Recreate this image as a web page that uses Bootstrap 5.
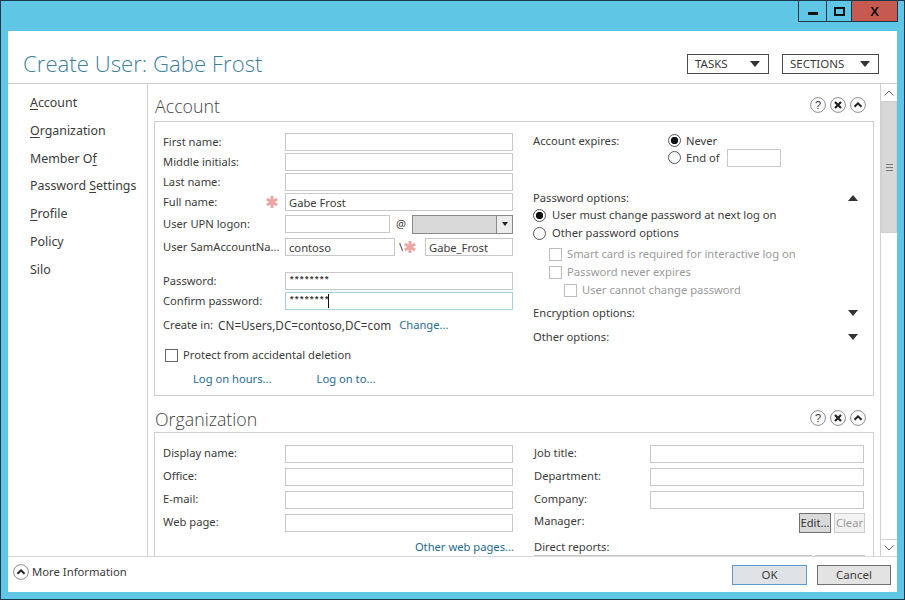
<!DOCTYPE html>
<html>
<head>
    <title>Create User: Gabe Frost</title>
    <meta charset="utf-8">
    <link href="https://cdn.jsdelivr.net/npm/bootstrap@5.3.3/dist/css/bootstrap.min.css" rel="stylesheet">
    <script src="https://cdn.jsdelivr.net/npm/bootstrap@5.3.3/dist/js/bootstrap.bundle.min.js"></script>
    <style>
        html, body { margin: 0; height: 100%; overflow: hidden; }
        body { background: #5fc6e6; font-family: "Noto Sans", "Open Sans", sans-serif; font-size: 11.2px; color: #3b3b3b; line-height: 16px; }
        u { text-underline-offset: 2px; }
        a { color: #1f6c8e; text-decoration: none; }

        .win { width: 905px; height: 600px; border: 1px solid #16384a; border-top-width: 1px; padding: 0 7px 7px 7px; background: #5fc6e6; }
        .win-bar { height: 30px; padding-right: 0; margin-right: -1px; }
        .win-btn { height: 21px; border: 1px solid #16384a; border-top: 0; margin-left: -1px; }
        .win-min { width: 29px; }
        .win-max { width: 26px; }
        .win-close { width: 47px; background: #c75a50; }
        .glyph-min { width: 10px; height: 3px; background: #111; margin-top: 5px; }
        .glyph-max { width: 11px; height: 9px; border: 2px solid #111; }
        .glyph-x { font: 700 13px "Liberation Sans", sans-serif; color: #111; }

        .client { width: 889px; height: 561px; background: #fff; }
        .top-head { height: 53px; border-bottom: 1px solid #d0d0d0; padding: 23px 18px 0 15px; }
        .page-title { font-family: "Open Sans", sans-serif; font-weight: 300; font-size: 22.2px; line-height: 20px; color: #3e7f9d; margin: 0; }
        .head-btn { height: 20px; border: 1px solid #4a4a4a; border-radius: 0; background: #fff; color: #3b3b3b; font-size: 11.5px; line-height: 18px; padding: 0 8px 0 7px; }
        .head-btn:hover { background: #fff; color: #3b3b3b; border-color: #4a4a4a; }
        .w-tasks { width: 82px; margin-right: 13px; }
        .w-sections { width: 97px; }
        .tri-down { width: 0; height: 0; border: 5px solid transparent; border-top: 6px solid #333; border-bottom: 0; }
        .tri-up { width: 0; height: 0; border: 5px solid transparent; border-bottom: 6px solid #333; border-top: 0; }

        .mid { height: 473px; border-bottom: 1px solid #d8d8d8; overflow: hidden; }
        .side { width: 140px; border-right: 1px solid #d0d0d0; padding: 11px 0 0 22px; flex: none; }
        .side-item { height: 27.8px; font-size: 12.4px; line-height: 16px; color: #3b3b3b; white-space: nowrap; }
        .scroll-pane { width: 732px; flex: none; overflow: hidden; padding: 0 6px 0 6px; }
        .sec-head { height: 37px; padding: 10px 8px 0 1px; }
        .sec-title { font-family: "Open Sans", sans-serif; font-weight: 300; font-size: 17.8px; line-height: 24px; color: #444; margin: 0; }
        .sec-icons { gap: 4px; padding-top: 3px; }
        .sec-icons svg { width: 16px; height: 16px; display: block; }
        .box { border: 1px solid #cfcfcf; width: 720px; background: #fff; }
        .box-acct { height: 275px; margin-bottom: 11px; }
        .box-org { height: 200px; }

        .col-l { width: 378px; flex: none; padding: 10px 0 0 8px; }
        .col-r { padding: 0; flex: 1; }
        .frow { display: flex; align-items: center; height: 20px; white-space: nowrap; }
        .frow .lbl { width: 122px; flex: none; position: relative; }
        .fld { height: 18px; min-height: 0; padding: 0 3px; border: 1px solid #c8c8c8; border-radius: 0; font-size: 11.2px; line-height: 16px; color: #3b3b3b; box-shadow: none; font-family: inherit; }
        .w228 { width: 228px; }
        .w105 { width: 105px; flex: none; }
        .w110 { width: 110px; flex: none; }
        .w88 { width: 88px; flex: none; }
        .fld-active { border-color: #a8cfe0; }
        .star { width: 14px; height: 14px; display: block; flex: none; }
        .star-abs { position: absolute; right: 6px; top: 1px; }
        .sam-sep { width: 30px; padding-left: 4px; }
        .combo { width: 101px; height: 19px; background: #d9d9d9; border: 1px solid #8a8a8a; justify-content: flex-end; }
        .combo-arrow { width: 16px; height: 17px; background: #ececec; border-left: 1px solid #8a8a8a; }
        .tri-sm { width: 0; height: 0; border: 3px solid transparent; border-top: 4px solid #222; border-bottom: 0; }
        .pw-text { font-family: "Liberation Mono", monospace; font-size: 9px; letter-spacing: -.4px; font-weight: 700; }
        .caret-wrap { position: relative; }
        .caret-bar { position: absolute; left: 43px; top: 2px; width: 1px; height: 14px; background: #111; }

        .rdo.form-check-input, .chk.form-check-input { margin: 0; float: none; flex: none; width: 13px; height: 13px; background-color: #fff; box-shadow: none; }
        .rdo.form-check-input { border: 1px solid #555; }
        .rdo.form-check-input:checked { background-color: #fff; border-color: #555; background-image: radial-gradient(circle, #111 3.4px, #fff 4px); }
        .chk.form-check-input { border: 1px solid #666; border-radius: 0; }
        .chk.off.form-check-input { border-color: #bcbcbc; opacity: 1; }
        .off-text { color: #9a9a9a; }

        .rline { display: flex; align-items: center; gap: 6px; height: 18px; white-space: nowrap; }
        .rline-exp { height: 17px; gap: 5px; }
        .rline-chk { gap: 5px; }
        .acct-exp { padding: 10px 0 0 0; height: 50px; }
        .exp-lbl { width: 131px; flex: none; padding-top: 1px; }
        .w54 { width: 54px; flex: none; margin-left: 2px; }
        .optrow { display: flex; justify-content: space-between; align-items: center; padding: 0 15px 0 0; }
        .opt-first { margin-top: 17px; height: 17px; }
        .in1 { padding-left: 16px; }
        .in2 { padding-left: 31px; }
        .opt-check { margin-top: 3px; }
        .opt-enc { height: 24px; margin-top: 2px; }
        .opt-oth { height: 24px; }

        .gap-create { margin-top: 4px; height: 20px; }
        .create-lbl { margin-right: 5px; }
        .create-dn { font-size: 11.7px; }
        .plain-check { margin-top: 11px; height: 18px; gap: 5px; padding-left: 2px; }
        .links-row { margin-top: 7px; padding-left: 30px; gap: 45px; }
        .mt-upn { margin-top: 2px; }
        .mt-sam { margin-top: 3px; }
        .mt-pw { margin-top: 14px; }

        .sec-head-org { height: 25px; padding-top: 0; }
        .org-l { width: 379px; flex: none; padding: 9px 0 0 8px; }
        .org-r { flex: 1; padding: 9px 9px 0 0; }
        .orow { display: flex; align-items: center; height: 23px; white-space: nowrap; }
        .orow .lbl { width: 122px; flex: none; margin-bottom: 2px; }
        .orow .lbr { width: 116px; flex: none; margin-bottom: 2px; }
        .w214 { width: 214px; }
        .sm-btn { height: 20px; padding: 0; border-radius: 0; font-size: 11.2px; line-height: 18px; }
        .btn-edit { width: 32px; background: #d9d9d9; border: 1px solid #6f6f6f; color: #333; }
        .btn-clear.btn:disabled { width: 31px; background: #f2f2f2; border: 1px solid #ccc; color: #9a9a9a; opacity: 1; margin-left: 3px; }
        .more-link { text-align: right; width: 351px; padding-top: 5px; }
        .direct { padding-top: 5px; height: 21px; }
        .list-stub { height: 8px; gap: 3px; }
        .stub-a { width: 278px; height: 8px; border: 1px solid #c8c8c8; }
        .stub-b { width: 50px; height: 8px; border-top: 1px solid #c8c8c8; }

        .sbar { width: 17px; flex: none; border-left: 1px solid #d0d0d0; background: #fff; }
        .sb-btn { height: 17px; display: flex; align-items: center; justify-content: center; }
        .sb-btn svg { width: 10px; height: 6px; }
        .sb-thumb { height: 132px; background: #d8d8d8; border: 1px solid #cfcfcf; }
        .sb-grip { width: 7px; height: 7px; border-top: 1px solid #777; border-bottom: 1px solid #777; position: relative; }
        .sb-grip-mid { height: 1px; background: #777; margin-top: 2px; }
        .sb-track { flex: 1; }
        .sb-end { border-top: 1px solid #d0d0d0; }

        .foot { height: 35px; padding: 0 6px 0 5px; }
        .foot svg { width: 16px; height: 16px; display: block; }
        .foot-left { margin-bottom: 5px; }
        .foot-text { font-size: 11.3px; margin-left: 3px; color: #3b3b3b; }
        .foot-btn { height: 20px; padding: 0; border-radius: 0; font-size: 11.5px; line-height: 18px; color: #3b3b3b; }
        .btn-ok { width: 75px; background: #dfe3e6; border: 1px solid #5a9ccc; margin-right: 10px; margin-top: 1px; }
        .btn-cancel { width: 74px; background: #e3e3e3; border: 1px solid #6f6f6f; }
    </style>
</head>
<body>
<svg width="0" height="0" class="d-block">
    <symbol id="ic-close" viewBox="0 0 16 16"><circle cx="8" cy="8" r="7.4" fill="#fff" stroke="#8d8d8d"/><path d="M5 5l6 6M11 5l-6 6" stroke="#222" stroke-width="2.2" fill="none"/></symbol>
    <symbol id="ic-up" viewBox="0 0 16 16"><circle cx="8" cy="8" r="7.4" fill="#fff" stroke="#8d8d8d"/><path d="M4.5 9.8L8 6.3l3.5 3.5" stroke="#222" stroke-width="2" fill="none"/></symbol>
    <symbol id="ic-star" viewBox="0 0 14 14"><path d="M7 1v12M1.8 4l10.4 6M12.2 4L1.8 10" stroke="#eba6a2" stroke-width="3" fill="none"/></symbol>
</svg>
<div class="win d-flex flex-column">
    <div class="win-bar d-flex justify-content-end">
        <div class="win-btn win-min d-flex align-items-center justify-content-center"><div class="glyph-min"></div></div>
        <div class="win-btn win-max d-flex align-items-center justify-content-center"><div class="glyph-max"></div></div>
        <div class="win-btn win-close d-flex align-items-center justify-content-center"><span class="glyph-x">X</span></div>
    </div>
    <div class="client d-flex flex-column">
        <div class="top-head d-flex justify-content-between">
            <h1 class="page-title">Create User: Gabe Frost</h1>
            <div class="d-flex">
                <button class="btn head-btn w-tasks d-flex align-items-center justify-content-between"><span>TASKS</span><span class="tri-down"></span></button>
                <button class="btn head-btn w-sections d-flex align-items-center justify-content-between"><span>SECTIONS</span><span class="tri-down"></span></button>
            </div>
        </div>
        <div class="mid d-flex">
            <div class="side">
                <div class="side-item"><u>A</u>ccount</div>
                <div class="side-item"><u>O</u>rganization</div>
                <div class="side-item">Member O<u>f</u></div>
                <div class="side-item">Password <u>S</u>ettings</div>
                <div class="side-item"><u>P</u>rofile</div>
                <div class="side-item">Policy</div>
                <div class="side-item">Silo</div>
            </div>
            <div class="scroll-pane">
                <div class="sec-head d-flex justify-content-between">
                    <h2 class="sec-title">Account</h2>
                    <div class="sec-icons d-flex">
                        <svg viewBox="0 0 16 16"><circle cx="8" cy="8" r="7.4" fill="#fff" stroke="#8d8d8d"/><text x="8" y="12" text-anchor="middle" font-family="Liberation Sans" font-size="11" fill="#333">?</text></svg><svg><use href="#ic-close"/></svg><svg><use href="#ic-up"/></svg>
                    </div>
                </div>
                <div class="box box-acct d-flex">
                    <div class="col-l">
                        <div class="frow"><span class="lbl">First name:</span><input class="form-control fld w228"></div>
                        <div class="frow"><span class="lbl">Middle initials:</span><input class="form-control fld w228"></div>
                        <div class="frow"><span class="lbl">Last name:</span><input class="form-control fld w228"></div>
                        <div class="frow"><span class="lbl">Full name:<svg class="star star-abs"><use href="#ic-star"/></svg></span><input class="form-control fld w228" value="Gabe Frost"></div>
                        <div class="frow mt-upn">
                            <span class="lbl">User UPN logon:</span>
                            <input class="form-control fld w105">
                            <span class="text-center" style="width:22px">@</span>
                            <div class="combo d-flex"><div class="combo-arrow d-flex align-items-center justify-content-center"><span class="tri-sm"></span></div></div>
                        </div>
                        <div class="frow mt-sam">
                            <span class="lbl">User SamAccountNa...</span>
                            <input class="form-control fld w110" value="contoso">
                            <span class="d-flex align-items-center sam-sep">\<svg class="star"><use href="#ic-star"/></svg></span>
                            <input class="form-control fld w88" value="Gabe_Frost">
                        </div>
                        <div class="frow mt-pw"><span class="lbl">Password:</span><input class="form-control fld w228 pw-text" value="********"></div>
                        <div class="frow"><span class="lbl">Confirm password:</span><span class="caret-wrap"><input class="form-control fld fld-active w228 pw-text" value="********"><span class="caret-bar"></span></span></div>
                        <div class="frow gap-create"><span class="create-lbl">Create in:</span><span class="create-dn">CN=Users,DC=contoso,DC=com</span><a href="#" class="ms-2">Change...</a></div>
                        <div class="d-flex align-items-center plain-check"><input class="form-check-input chk" type="checkbox"><span>Protect from accidental deletion</span></div>
                        <div class="d-flex links-row"><a href="#">Log on hours...</a><a href="#">Log on to...</a></div>
                    </div>
                    <div class="col-r">
                        <div class="acct-exp d-flex">
                            <div class="exp-lbl">Account expires:</div>
                            <div class="ms-1">
                                <div class="rline rline-exp"><input class="form-check-input rdo" type="radio" name="exp" checked><span>Never</span></div>
                                <div class="rline rline-exp"><input class="form-check-input rdo" type="radio" name="exp"><span>End of</span><input class="form-control fld w54"></div>
                            </div>
                        </div>
                        <div class="optrow opt-first"><span>Password options:</span><span class="tri-up"></span></div>
                        <div>
                            <div class="rline"><input class="form-check-input rdo" type="radio" name="pw" checked><span>User must change password at next log on</span></div>
                            <div class="rline"><input class="form-check-input rdo" type="radio" name="pw"><span>Other password options</span></div>
                            <div class="rline rline-chk in1 opt-check"><input class="form-check-input chk off" type="checkbox"><span class="off-text">Smart card is required for interactive log on</span></div>
                            <div class="rline rline-chk in1"><input class="form-check-input chk off" type="checkbox"><span class="off-text">Password never expires</span></div>
                            <div class="rline rline-chk in2"><input class="form-check-input chk off" type="checkbox"><span class="off-text">User cannot change password</span></div>
                        </div>
                        <div class="optrow opt-enc"><span>Encryption options:</span><span class="tri-down"></span></div>
                        <div class="optrow opt-oth"><span>Other options:</span><span class="tri-down"></span></div>
                    </div>
                </div>
                <div class="sec-head sec-head-org d-flex justify-content-between">
                    <h2 class="sec-title">Organization</h2>
                    <div class="sec-icons d-flex">
                        <svg viewBox="0 0 16 16"><circle cx="8" cy="8" r="7.4" fill="#fff" stroke="#8d8d8d"/><text x="8" y="12" text-anchor="middle" font-family="Liberation Sans" font-size="11" fill="#333">?</text></svg><svg><use href="#ic-close"/></svg><svg><use href="#ic-up"/></svg>
                    </div>
                </div>
                <div class="box box-org d-flex">
                    <div class="org-l">
                        <div class="orow"><span class="lbl">Display name:</span><input class="form-control fld w228"></div>
                        <div class="orow"><span class="lbl">Office:</span><input class="form-control fld w228"></div>
                        <div class="orow"><span class="lbl">E-mail:</span><input class="form-control fld w228"></div>
                        <div class="orow"><span class="lbl">Web page:</span><input class="form-control fld w228"></div>
                        <div class="more-link"><a href="#">Other web pages...</a></div>
                    </div>
                    <div class="org-r">
                        <div class="orow"><span class="lbr">Job title:</span><input class="form-control fld w214"></div>
                        <div class="orow"><span class="lbr">Department:</span><input class="form-control fld w214"></div>
                        <div class="orow"><span class="lbr">Company:</span><input class="form-control fld w214"></div>
                        <div class="orow justify-content-between"><span class="mb-1">Manager:</span><span class="d-flex"><button class="btn sm-btn btn-edit">Edit...</button><button class="btn sm-btn btn-clear" disabled>Clear</button></span></div>
                        <div class="direct">Direct reports:</div>
                        <div class="list-stub d-flex"><div class="stub-a"></div><div class="stub-b"></div></div>
                    </div>
                </div>
            </div>
            <div class="sbar d-flex flex-column">
                <div class="sb-btn"><svg viewBox="0 0 10 6"><path d="M.5 5.5L5 1l4.5 4.5" stroke="#666" fill="none"/></svg></div>
                <div class="sb-thumb d-flex align-items-center justify-content-center"><div class="sb-grip"><div class="sb-grip-mid"></div></div></div>
                <div class="sb-track"></div>
                <div class="sb-btn sb-end"><svg viewBox="0 0 10 6"><path d="M.5 .5L5 5l4.5-4.5" stroke="#666" fill="none"/></svg></div>
            </div>
        </div>
        <div class="foot d-flex align-items-center justify-content-between">
            <div class="d-flex align-items-center foot-left"><svg><use href="#ic-up"/></svg><span class="foot-text">More Information</span></div>
            <div class="d-flex align-items-center">
                <button class="btn foot-btn btn-ok">OK</button>
                <button class="btn foot-btn btn-cancel">Cancel</button>
            </div>
        </div>
    </div>
</div>
</body>
</html>
